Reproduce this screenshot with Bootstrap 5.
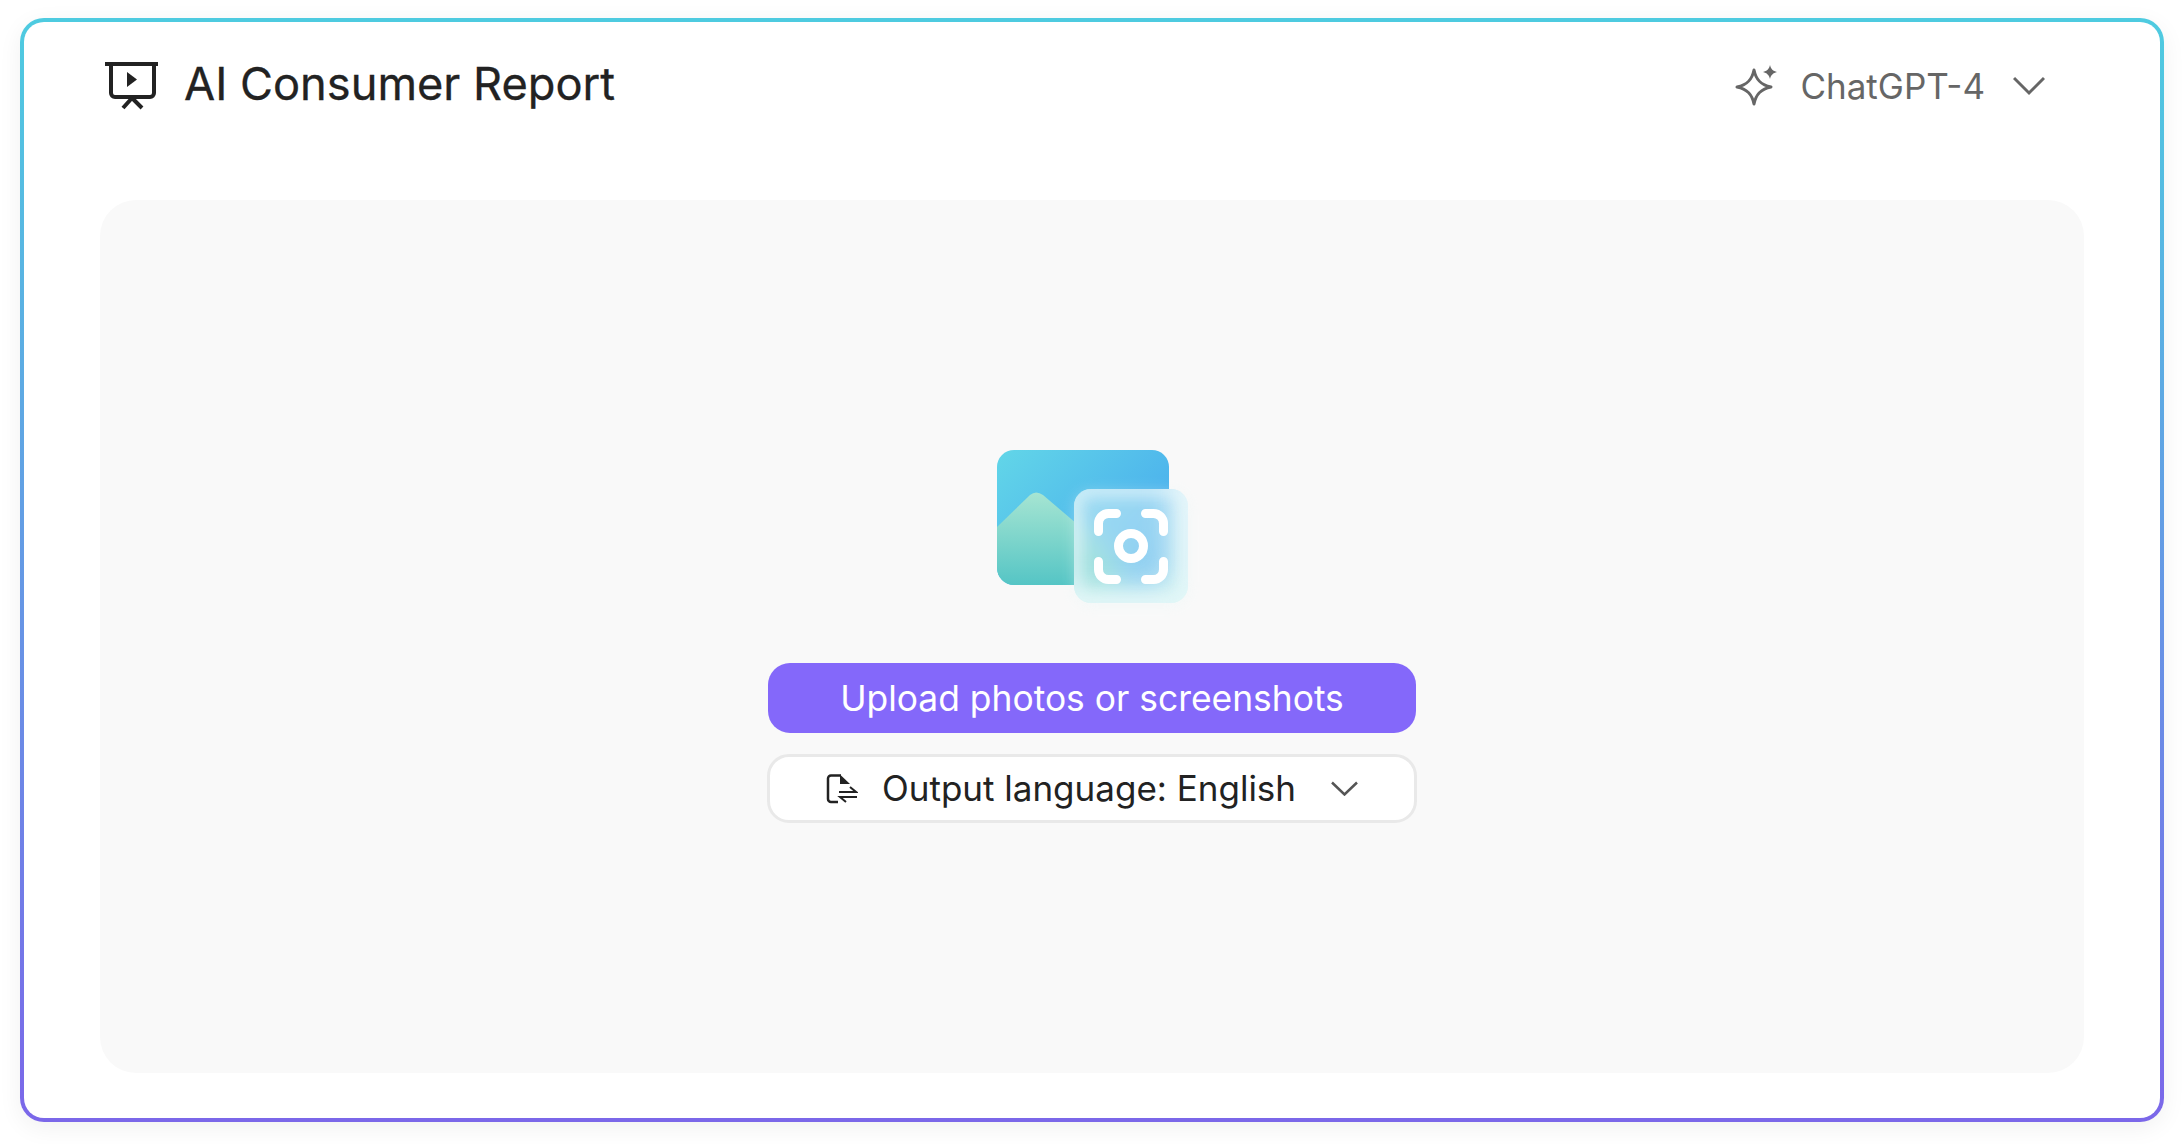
<!DOCTYPE html>
<html lang="en">

<head>
    <meta charset="UTF-8">
    <title>AI Consumer Report</title>
    <link href="https://cdn.jsdelivr.net/npm/bootstrap@5.3.0/dist/css/bootstrap.min.css" rel="stylesheet">
    <style>
        body {
            font-family: Inter, "Liberation Sans", sans-serif;
            background: #fff;
            height: 1144px;
            overflow: hidden;
        }

        .report-frame {
            width: 2144px;
            height: 1104px;
            margin: 18px 0 0 20px;
            padding: 0 76px 45px;
            border: 4px solid transparent;
            border-radius: 24px;
            background: linear-gradient(#fff, #fff) padding-box, linear-gradient(180deg, #4ecbe0 0%, #7b67e9 100%) border-box;
            box-shadow: 0 6px 24px rgba(0, 0, 0, .06);
        }

        .report-head {
            height: 178px;
            padding: 0 39px 50px 5px;
        }

        .report-title {
            font-size: 45.2px;
            font-weight: 400;
            color: #222;
            margin: 0 0 5px 25px;
            line-height: 1;
            -webkit-text-stroke: .3px #222;
        }

        .model-name {
            font-size: 35px;
            color: #666;
            margin: 0 28px 0 21px;
            line-height: 1;
        }

        .upload-panel {
            height: 873px;
            background: #f9f9f9;
            border-radius: 36px;
        }

        .upload-art {
            display: block;
            margin-bottom: 60px;
            overflow: visible;
        }

        .upload-btn,
        .lang-btn {
            width: 650px;
            border-radius: 22px;
            line-height: 1;
            padding: 0;
        }

        .upload-btn {
            width: 648px;
            height: 70px;
            background: #8468fa;
            border: 0;
            color: #fff;
            font-size: 35.4px;
            padding-top: 2px;
            margin-bottom: 21px;
        }

        .upload-btn:hover {
            background: #7659ee;
            color: #fff;
        }

        .lang-btn {
            height: 69px;
            background: #fff;
            border: 3px solid #e9e9e9;
            color: #222;
            font-size: 35px;
        }

        .lang-btn span {
            margin: 0 35px 0 24px;
        }
    </style>
</head>

<body>
    <div class="report-frame">
        <!-- Cabecera -->
        <div class="report-head d-flex align-items-center justify-content-between">
            <div class="d-flex align-items-center">
                <svg width="54" height="50" viewBox="0 0 54 50" fill="none" stroke="#222" stroke-width="4">
                    <path d="M0 3H53" />
                    <path d="M6 3V32a4 4 0 0 0 4 4H45a4 4 0 0 0 4-4V3" />
                    <path d="M27 37L18 47M27 37L37 47" />
                    <path d="M22 11L32 18.500L22 26Z" fill="#222" stroke="none" />
                </svg>
                <h1 class="report-title">AI Consumer Report</h1>
            </div>
            <div class="d-flex align-items-center">
                <svg width="44" height="42" viewBox="0 0 44 42" fill="none" stroke="#666" stroke-width="3" stroke-linejoin="round">
                    <path d="M19 5C21 15 26 20 36 22C26 24 21 29 19 39C17 29 12 24 2 22C12 20 17 15 19 5Z" />
                    <path d="M35 0C36 4 38 6 42 7C38 8 36 10 35 14C34 10 32 8 28 7C32 6 34 4 35 0Z" fill="#666" stroke="none" />
                </svg>
                <span class="model-name">ChatGPT-4</span>
                <svg width="32" height="20" viewBox="0 0 32 20" fill="none" stroke="#666" stroke-width="3">
                    <path d="M1 2L16 17L31 2" />
                </svg>
            </div>
        </div>

        <!-- Zona de subida -->
        <div class="upload-panel d-flex flex-column align-items-center justify-content-center">
            <svg class="upload-art" width="191" height="153" viewBox="0 0 191 153">
                <defs>
                    <linearGradient id="backGrad" x1="0" y1="0" x2="1" y2="0.8">
                        <stop offset="0" stop-color="#62d6e8" />
                        <stop offset="1" stop-color="#46a8ee" />
                    </linearGradient>
                    <linearGradient id="hillGrad" x1="0" y1="0" x2="0" y2="1">
                        <stop offset="0" stop-color="#a6e5d2" />
                        <stop offset="1" stop-color="#55c5c5" />
                    </linearGradient>
                    <linearGradient id="glassGrad" x1="0" y1="0" x2="0" y2="1">
                        <stop offset="0" stop-color="#e2f4fa" />
                        <stop offset="1" stop-color="#d8f5f3" />
                    </linearGradient>
                    <clipPath id="backClip"><rect width="172" height="135" rx="17" /></clipPath>
                    <clipPath id="glassClip"><rect x="77" y="39" width="114" height="114" rx="17" /></clipPath>
                    <filter id="glassBlur" x="-20%" y="-20%" width="140%" height="140%">
                        <feGaussianBlur stdDeviation="13" />
                    </filter>
                    <filter id="edgeBlur" x="-30%" y="-30%" width="160%" height="160%">
                        <feGaussianBlur stdDeviation="7" />
                    </filter>
                    <g id="photoBack">
                        <rect width="172" height="135" rx="17" fill="url(#backGrad)" />
                        <path d="M0 77L33 45Q39 40 46 45L120 108V135H0Z" fill="url(#hillGrad)" clip-path="url(#backClip)" />
                    </g>
                </defs>
                <use href="#photoBack" />
                <rect x="77" y="41" width="114" height="114" rx="18" fill="#e4f6f6" opacity=".35" filter="url(#edgeBlur)" />
                <g clip-path="url(#glassClip)">
                    <rect x="77" y="39" width="114" height="114" fill="url(#glassGrad)" />
                    <use href="#photoBack" filter="url(#glassBlur)" opacity=".5" />
                    <rect x="77" y="39" width="114" height="114" rx="17" fill="none" stroke="#eaf8fb" stroke-width="18" opacity=".6" filter="url(#edgeBlur)" />
                </g>
                <g fill="none" stroke="#fff" stroke-width="9" stroke-linecap="round">
                    <path d="M101.500 81.500v-8a10 10 0 0 1 10-10h8" />
                    <path d="M148.500 63.500h8a10 10 0 0 1 10 10v8" />
                    <path d="M101.500 111.500v8a10 10 0 0 0 10 10h8" />
                    <path d="M166.500 111.500v8a10 10 0 0 1-10 10h-8" />
                    <circle cx="134" cy="96" r="12.500" />
                </g>
            </svg>
            <button type="button" class="btn upload-btn">Upload photos or screenshots</button>
            <button type="button" class="btn lang-btn d-flex align-items-center justify-content-center">
                <svg width="32" height="30" viewBox="0 0 32 30" fill="none" stroke="#222" stroke-width="2.500">
                    <path d="M15 1.500H5a3 3 0 0 0-3 3V25a3 3 0 0 0 3 3H12" />
                    <path d="M14 0.500L24 10H14Z" fill="#222" stroke="none" />
                    <path d="M13 18H30L24 13" stroke-width="2" />
                    <path d="M31 23H14L20 28" stroke-width="2" />
                </svg>
                <span>Output language: English</span>
                <svg width="27" height="15" viewBox="0 0 27 15" fill="none" stroke="#555" stroke-width="2.500">
                    <path d="M1 1.500L13.500 13.500L26 1.500" />
                </svg>
            </button>
        </div>
    </div>

    <script src="https://cdn.jsdelivr.net/npm/bootstrap@5.3.0/dist/js/bootstrap.bundle.min.js"></script>
</body>

</html>
